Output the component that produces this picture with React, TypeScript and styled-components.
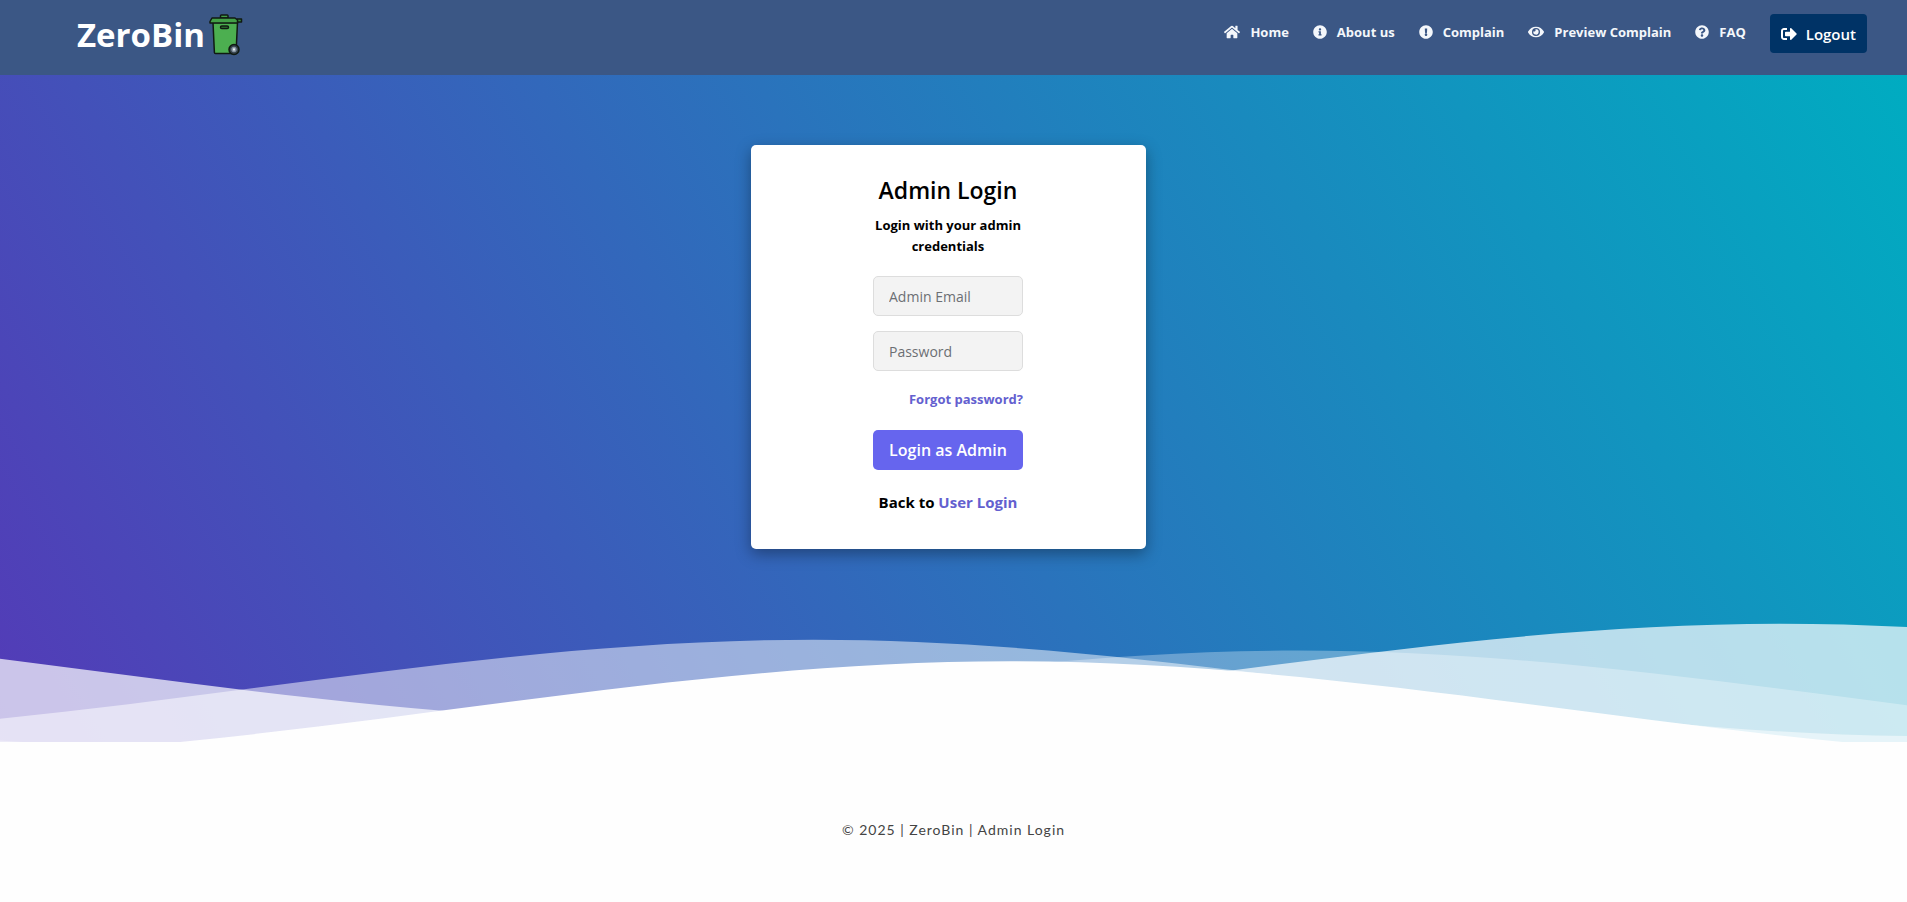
import React from "react";
import styled, { createGlobalStyle } from "styled-components";
import {
  FaEye,
  FaExclamationCircle,
  FaHome,
  FaInfoCircle,
  FaQuestionCircle,
  FaSignOutAlt,
} from "react-icons/fa";

const GlobalStyle = createGlobalStyle`
  *, *::before, *::after { box-sizing: border-box; }
  body {
    margin: 0;
    background: #fefefe;
    color: #000;
    font-family: "Segoe UI", "Open Sans", "Noto Sans", sans-serif;
    overflow-x: hidden;
  }
`;

const NavBar = styled.nav`
  display: flex;
  justify-content: space-between;
  align-items: flex-start;
  height: 75px;
  padding: 0 40px 0 77px;
  background: #3b5785;
  color: #fff;
`;

const Brand = styled.a`
  display: flex;
  align-items: center;
  gap: 4px;
  padding-top: 14px;
  color: #fff;
  font-size: 33px;
  line-height: 40px;
  font-weight: 700;
  text-decoration: none;
`;

const NavLinks = styled.ul`
  display: flex;
  align-items: flex-start;
  gap: 24px;
  margin: 0;
  padding: 14px 0 0;
  list-style: none;
`;

const NavLink = styled.a`
  display: flex;
  align-items: center;
  gap: 10px;
  height: 36px;
  color: #f4f7fb;
  font-size: 13px;
  font-weight: 700;
  text-decoration: none;
`;

const LogoutButton = styled.button`
  display: flex;
  align-items: center;
  justify-content: center;
  gap: 9px;
  height: 39px;
  padding: 0 11px;
  border: 0;
  border-radius: 4px;
  background: #003366;
  color: #fff;
  font: inherit;
  font-size: 15px;
  line-height: 20px;
  font-weight: 600;
`;

const Hero = styled.header`
  padding-top: 70px;
  background: linear-gradient(60deg, #543ab7 0%, #00acc1 100%);
`;

const Card = styled.main`
  width: 395px;
  margin: 0 auto;
  padding: 30px 123px 34px 122px;
  border-radius: 5px;
  background: #fff;
  box-shadow: 0 5px 15px rgba(0, 0, 0, 0.35);
`;

const CardSlot = styled.div`
  padding-right: 10px;
`;

const LoginForm = styled.form`
  display: flex;
  flex-direction: column;
`;

const Title = styled.h1`
  margin: 0 -20px;
  font-size: 23px;
  line-height: 30px;
  font-weight: 600;
  text-align: center;
`;

const Subtitle = styled.p`
  margin: 10px -10px 19px;
  font-size: 13px;
  line-height: 21px;
  font-weight: 700;
  text-align: center;
`;

const Field = styled.input`
  width: 100%;
  height: 40px;
  margin-bottom: 15px;
  padding: 0 15px;
  border: 1px solid #dddddd;
  border-radius: 5px;
  background: #f3f3f3;
  font: inherit;
  font-size: 14px;

  &::placeholder {
    color: #6c6f73;
    opacity: 1;
  }
`;

const TextLink = styled.a`
  color: #6360cf;
  text-decoration: none;
`;

const ForgotRow = styled.p`
  margin: 3px 0 21px -10px;
  font-size: 13px;
  line-height: 20px;
  font-weight: 700;
  text-align: right;
  white-space: nowrap;
`;

const SubmitButton = styled.button`
  height: 40px;
  padding: 0;
  border: 0;
  border-radius: 5px;
  background: #6665ee;
  color: #fff;
  font: inherit;
  font-size: 16px;
  font-weight: 600;
  white-space: nowrap;
`;

const BackRow = styled.p`
  margin: 20px -20px 0;
  font-size: 15px;
  line-height: 25px;
  font-weight: 700;
  text-align: center;
  white-space: nowrap;
`;

const Waves = styled.svg`
  display: block;
  width: 100%;
  height: 150px;
  margin: 64px 0 -21px;
`;

const Footer = styled.footer`
  position: relative;
  padding: 76px 0 60px;
  background: #fefefe;
  color: #444;
  font-family: Lato, sans-serif;
  font-size: 14px;
  line-height: 24px;
  letter-spacing: 1px;
  text-align: center;

  p {
    margin: 0;
  }
`;

const BinLogo = () => (
  <svg width="34" height="42" viewBox="0 0 34 42" aria-hidden="true">
    <g stroke="#101a12" strokeWidth="1.5" strokeLinejoin="round" strokeLinecap="round">
      <path d="M4 8.500h24.500l-1.500 31H6.500q-1 0-1.100-1z" fill="#4caf50" />
      <path d="M11.500 4V1.800q0-.8.8-.8h5.900q.8 0 .8.800V4z" fill="#43a047" />
      <path d="M28 5h4.500v3H28z" fill="#388e3c" />
      <path d="M1 9V7.500L3 4h23l2.500 2v3z" fill="#43a047" />
      <rect x="11.500" y="12" width="8" height="2.600" rx="1.300" fill="#2e7d32" />
      <circle cx="25" cy="35.500" r="5" fill="#35424c" />
      <circle cx="25" cy="35.500" r="1.900" fill="#e8eef2" stroke="#8796a3" />
    </g>
  </svg>
);

const links = [
  { label: "Home", Icon: FaHome, size: 16 },
  { label: "About us", Icon: FaInfoCircle, size: 14 },
  { label: "Complain", Icon: FaExclamationCircle, size: 14 },
  { label: "Preview Complain", Icon: FaEye, size: 16 },
  { label: "FAQ", Icon: FaQuestionCircle, size: 14 },
];

const waves = [
  { shift: 36, drop: 0, fill: "rgba(255,255,255,0.7)" },
  { shift: -40, drop: 3, fill: "rgba(255,255,255,0.5)" },
  { shift: -2, drop: 5, fill: "rgba(255,255,255,0.3)" },
  { shift: -24.5, drop: 7, fill: "#fefefe" },
];

export default function App() {
  return (
    <>
      <GlobalStyle />
      <NavBar>
        <Brand href="#">
          ZeroBin
          <BinLogo />
        </Brand>
        <NavLinks>
          {links.map(({ label, Icon, size }) => (
            <li key={label}>
              <NavLink href="#">
                <Icon size={size} />
                {label}
              </NavLink>
            </li>
          ))}
          <li>
            <LogoutButton type="button">
              <FaSignOutAlt size={16} />
              Logout
            </LogoutButton>
          </li>
        </NavLinks>
      </NavBar>
      <Hero>
        <CardSlot>
          <Card>
            <LoginForm>
              <Title>Admin Login</Title>
              <Subtitle>
                Login with your admin
                <br />
                credentials
              </Subtitle>
              <Field type="email" placeholder="Admin Email" aria-label="Admin Email" />
              <Field type="password" placeholder="Password" aria-label="Password" />
              <ForgotRow>
                <TextLink href="#">Forgot password?</TextLink>
              </ForgotRow>
              <SubmitButton type="submit">Login as Admin</SubmitButton>
              <BackRow>
                Back to <TextLink href="#">User Login</TextLink>
              </BackRow>
            </LoginForm>
          </Card>
        </CardSlot>
        <Waves viewBox="0 24 150 28" preserveAspectRatio="none" aria-hidden="true">
          <defs>
            <path
              id="gentle-wave"
              d="M-160 44c30 0 58-18 88-18s58 18 88 18 58-18 88-18 58 18 88 18v44h-352z"
            />
          </defs>
          {waves.map(({ shift, drop, fill }) => (
            <use key={drop} href="#gentle-wave" x={shift} y={drop} fill={fill} />
          ))}
        </Waves>
      </Hero>
      <Footer>
        <p>© 2025 | ZeroBin | Admin Login</p>
      </Footer>
    </>
  );
}
